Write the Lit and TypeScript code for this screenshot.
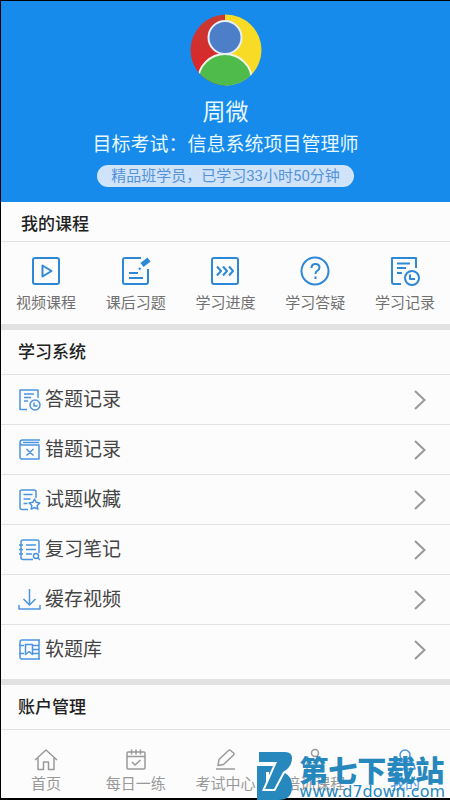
import { LitElement, html, css, svg, type TemplateResult } from "lit";
import { customElement } from "lit/decorators.js";
import { classMap } from "lit/directives/class-map.js";

const icon = (size: number, body: TemplateResult, cls = "icon") => html`
  <svg class=${cls} width=${size} height=${size} viewBox="0 0 ${size} ${size}" aria-hidden="true">${body}</svg>`;

const courses = [
  { label: "视频课程", icon: svg`<rect x="2" y="2" width="26" height="26" rx="2"/><path d="M11.500 9.500v11l9-5.500z"/>` },
  { label: "课后习题", icon: svg`<path d="M20 2H4q-2 0-2 2v22q0 2 2 2h21q2 0 2-2V13"/><path d="M8 17h9M8 22h14M18 13.500l1.500-1.500"/><path d="M21 9L28 3.500" stroke-width="5"/>` },
  { label: "学习进度", icon: svg`<rect x="2" y="2" width="26" height="26" rx="2"/><path d="M7 10.500l4 4.500-4 4.500M13 10.500l4 4.500-4 4.500M19 10.500l4 4.500-4 4.500"/>` },
  { label: "学习答疑", icon: svg`<circle cx="15" cy="15" r="13.500"/><path d="M11.500 12q0-4 4-4t4 3.500q0 2-2.500 3.500-1.500 1-1.500 3"/><path d="M15.500 20.500v2.500"/>` },
  { label: "学习记录", icon: svg`<path d="M11 28H4q-2 0-2-2V2h24v10"/><path d="M7 7.500h13M7 12h9M7 17h5"/><circle cx="22" cy="22" r="7"/><path d="M20 18.500v4.500h5"/>` },
];

const systems = [
  { label: "答题记录", icon: svg`<path d="M9 21.500H2V2h18v8M6 6h10M6 9.500h7M6 13h4"/><circle cx="17" cy="17" r="5"/><path d="M16 14.500v3.500h3.500"/>` },
  { label: "错题记录", icon: svg`<path d="M22 2H4.500Q2 2 2 4.500t2.500 2.500H21v14H4q-2 0-2-2V4.500M5 4.500h16M8.500 11l7 6.500M15.500 11l-7 6.500"/>` },
  { label: "试题收藏", icon: svg`<path d="M10 21.500H4q-2 0-2-2V4q0-2 2-2h12q2 0 2 2v6M5.500 6.500h9M5.500 11h7M5.500 15.500h4"/><path d="M16.500 11l1.700 3.300 3.600.6-2.600 2.600.6 3.700-3.300-1.700-3.300 1.700.6-3.700-2.600-2.600 3.600-.6z"/>` },
  { label: "复习笔记", icon: svg`<path d="M15 21.500H5q-2 0-2-2V4q0-2 2-2h14q2 0 2 2v11M1 7h4M1 11.500h4M1 16h4M8 7h10M8 11.500h10M8 16h6"/><circle cx="18" cy="18" r="2.500"/><path d="M20 20l2 2"/>` },
  { label: "缓存视频", icon: svg`<path d="M11.500 1v16M5.500 11l6 6 6-6M1 17v4h21v-4"/>` },
  { label: "软题库", icon: svg`<path d="M22 2H4q-2 0-2 2v15q0 2 2 2h18M21 2v19M1 7.500h5M1 15.500h5M15 7.500h6M15 11.500h6M15 15.500h6"/><path d="M7.500 6.500h7v10l-3.500-3-3.500 3z"/>` },
];

const tabs = [
  { label: "首页", active: false, icon: svg`<path d="M1 12L12 2l11 10M4 10v11.500h5.500V14h5v7.500H20V10"/>` },
  { label: "每日一练", active: false, icon: svg`<rect x="3" y="4" width="18" height="17" rx="1"/><path d="M3 8.500h18M7.500 1.500v5M12 1.500v5M16.500 1.500v5M8 14l3 3 5.500-5"/>` },
  { label: "考试中心", active: false, icon: svg`<path d="M5 17.500l1-6L15.500 2.500q1-1 2 0l3 2.500q1 1 0 2L10.500 16.500zM3 21h19"/>` },
  { label: "培训课程", active: false, icon: svg`<circle cx="12" cy="5" r="3.500"/><path d="M4 21v-5q0-4 8-4t8 4v5"/>` },
  { label: "我的", active: true, icon: svg`<circle cx="12" cy="7" r="5"/><path d="M2 21q1-8 10-8t10 8z"/>` },
];

@customElement("app-root")
export class AppRoot extends LitElement {
  static styles = css`
    :host {
      display: flex;
      flex-direction: column;
      position: relative;
      box-sizing: border-box;
      min-height: 100vh;
      border: solid #000;
      border-width: 1px 0 2px 1px;
      background: #fcfcfc;
      color: #333;
      font-family: Roboto, "Noto Sans CJK SC", sans-serif;
    }
    a { color: inherit; text-decoration: none; }
    h1, h2, p { margin: 0; }
    .icon { flex: none; fill: none; stroke: #2f88d6; stroke-width: 2; stroke-linejoin: round; }
    .profile {
      display: flex;
      flex-direction: column;
      align-items: center;
      padding: 13px 0 15px;
      background: #168bec;
      color: #e8f8ff;
    }
    .avatar { display: block; }
    .name { margin-top: 11px; font-size: 23px; line-height: 32px; font-weight: 400; }
    .goal { font-size: 19px; line-height: 32px; margin-bottom: 4px; }
    .badge {
      padding: 0 14px;
      border-radius: 11px;
      background: #cfe3fa;
      color: #5592d8;
      font-size: 15px;
      line-height: 22px;
    }
    .title {
      padding: 0 17px;
      border-bottom: 1px solid #e2e2e2;
      font-size: 17px;
      line-height: 44px;
      font-weight: 500;
      color: #222;
    }
    .title.first { padding: 6px 20px 0; line-height: 33px; }
    .band { height: 6px; background: #e2e2e2; }
    .courses { display: grid; grid-template-columns: repeat(5, 1fr); padding: 14px 0 9px; }
    .course {
      display: flex;
      flex-direction: column;
      align-items: center;
      gap: 5px;
      font-size: 15px;
      line-height: 24px;
      color: #707070;
      white-space: nowrap;
    }
    .list { padding-bottom: 4px; }
    .row {
      display: flex;
      align-items: center;
      gap: 4px;
      height: 49px;
      padding: 0 24px 0 17px;
      border-bottom: 1px solid #e2e2e2;
      color: #444;
    }
    .row:last-child { border-bottom-color: transparent; }
    .row .icon { stroke: #4a94e0; stroke-width: 1.5; }
    .text { flex: 1; font-size: 19px; line-height: 24px; }
    .row .arrow { fill: none; stroke: #999; stroke-width: 2; }
    .tabs {
      flex: 1;
      display: grid;
      grid-template-columns: repeat(5, 1fr);
      align-items: start;
      padding-top: 18px;
    }
    .tab {
      display: flex;
      flex-direction: column;
      align-items: center;
      font-size: 15px;
      line-height: 24px;
      color: #999;
      white-space: nowrap;
    }
    .tab .icon { stroke: #999; stroke-width: 1.5; }
    .tab.active { color: #4a94e0; }
    .tab.active .icon { stroke: #4a94e0; }
    .mark {
      position: absolute;
      right: 5px;
      bottom: -2px;
      display: flex;
      align-items: flex-end;
      gap: 6px;
      color: #2788bd;
      pointer-events: none;
    }
    .site { font-size: 29px; line-height: 30px; font-weight: 900; font-family: "Noto Sans CJK SC", sans-serif; }
    .url { font: 16px/16px "DejaVu Sans", sans-serif; }
  `;

  render() {
    return html`
      <header class="profile">
        <svg class="avatar" width="72" height="72" viewBox="0 0 72 72" role="img" aria-label="头像">
          <defs>
            <clipPath id="round"><circle cx="36" cy="36" r="35.500"/></clipPath>
            <linearGradient id="red" x2="0" y2="1"><stop offset="0" stop-color="#c83b32"/><stop offset="1" stop-color="#e02028"/></linearGradient>
          </defs>
          <g clip-path="url(#round)">
            <path fill="url(#red)" d="M0 0h35v72H0z"/>
            <path fill="#f7db25" d="M35 0h37v72H35z"/>
            <circle cx="35" cy="67" r="27" fill="#4ebb4a" stroke="#f2f4ec" stroke-width="2"/>
            <circle cx="35" cy="23.500" r="16.500" fill="#4d7fc8" stroke="#e6eefa" stroke-width="2"/>
          </g>
        </svg>
        <h1 class="name">周微</h1>
        <p class="goal">目标考试：信息系统项目管理师</p>
        <p class="badge">精品班学员，已学习33小时50分钟</p>
      </header>

      <section>
        <h2 class="title first">我的课程</h2>
        <nav class="courses">
          ${courses.map((c) => html`<a class="course" href="#">${icon(30, c.icon)}<span>${c.label}</span></a>`)}
        </nav>
      </section>
      <div class="band"></div>

      <section>
        <h2 class="title">学习系统</h2>
        <nav class="list">
          ${systems.map((s) => html`
            <a class="row" href="#">
              ${icon(23, s.icon)}
              <span class="text">${s.label}</span>
              <svg class="arrow" width="12" height="20" viewBox="0 0 12 20" aria-hidden="true"><path d="M1 1l9.500 9L1 19"/></svg>
            </a>`)}
        </nav>
      </section>
      <div class="band"></div>

      <h2 class="title">账户管理</h2>

      <nav class="tabs">
        ${tabs.map((t) => html`
          <a class=${classMap({ tab: true, active: t.active })} href="#">${icon(24, t.icon)}<span>${t.label}</span></a>`)}
      </nav>

      <div class="mark">
        <svg width="36" height="48" viewBox="0 0 36 48" aria-hidden="true">
          <path fill="#2788bd" d="M0 14h20l8 7q7 4 7 12v2q0 13-14 13H0z"/>
          <path fill="#fcfcfc" d="M9 20h3v14H9z"/>
          <path fill="#2788bd" stroke="#fcfcfc" stroke-width="4" paint-order="stroke" d="M2 0h26q7 0 7 6 0 9-9 14L17 37H8L20 10H2z"/>
        </svg>
        <div>
          <div class="site">第七下载站</div>
          <div class="url">www.d7down.com</div>
        </div>
      </div>
    `;
  }
}
